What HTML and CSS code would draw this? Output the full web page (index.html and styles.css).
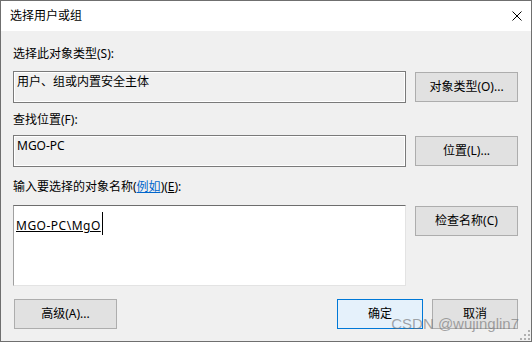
FILE: index.html
```html
<!DOCTYPE html>
<html>
    <head>
        <meta charset="utf-8">
        <title>选择用户或组</title>
        <link rel="stylesheet" href="styles.css">
    </head>
    <body>
        <div class="window">
            <div class="titlebar">
                <span class="title">选择用户或组</span>
                <svg class="close" width="10" height="10" viewBox="0 0 10 10">
                    <path d="M0.5 0.5 L9.5 9.5 M9.5 0.5 L0.5 9.5" stroke="#000" stroke-width="1" fill="none"/>
                </svg>
            </div>
            <div class="content">
                <p class="label first">选择此对象类型(S):</p>
                <div class="row gap9">
                    <div class="field">用户、组或内置安全主体</div>
                    <button class="btn">对象类型(O)...</button>
                </div>
                <p class="label gap9">查找位置(F):</p>
                <div class="row gap7">
                    <div class="field">MGO-PC</div>
                    <button class="btn">位置(L)...</button>
                </div>
                <p class="label gap12">输入要选择的对象名称(<a class="link" href="#">例如</a>)(<u>E</u>):</p>
                <div class="row top gap10">
                    <div class="names"><span class="typed">MGO-PC\MgO</span><span class="caret"></span></div>
                    <button class="btn check">检查名称(C)</button>
                </div>
                <div class="footer">
                    <button class="btn advanced">高级(A)...</button>
                    <div class="actions">
                        <button class="btn small default">确定</button>
                        <button class="btn small">取消</button>
                    </div>
                </div>
            </div>
            <span class="watermark">CSDN @wujinglin7</span>
            <svg class="grip" width="10" height="10" viewBox="0 0 10 10">
                <rect x="8" y="0" width="2" height="2" fill="#b0b0b0"/>
                <rect x="4" y="4" width="2" height="2" fill="#b0b0b0"/>
                <rect x="8" y="4" width="2" height="2" fill="#b0b0b0"/>
                <rect x="0" y="8" width="2" height="2" fill="#b0b0b0"/>
                <rect x="4" y="8" width="2" height="2" fill="#b0b0b0"/>
                <rect x="8" y="8" width="2" height="2" fill="#b0b0b0"/>
            </svg>
        </div>
    </body>
</html>
```

FILE: styles.css
```css
*{margin:0;padding:0}
body{
    background:#fff;
}
.window{
    position:relative;
    width:532px;
    height:342px;
    box-sizing:border-box;
    border:1px solid #6f6f6f;
    background:#f0f0f0;
    font:12px/16px "Noto Sans", "Noto Sans CJK SC", sans-serif;
    color:#000;
}
.titlebar{
    height:30px;
    background:#fff;
    display:flex;
    align-items:center;
    justify-content:space-between;
    padding:0 9px;
}
.title{
    font-size:12px;
}
.content{
    padding:15px 13px 0 12px;
}
.label.gap9{margin-top:9px}
.label.gap12{margin-top:12px}
.row{
    display:flex;
    align-items:center;
    gap:9px;
}
.row.top{
    align-items:flex-start;
}
.gap9{margin-top:9px}
.gap7{margin-top:7px}
.gap10{margin-top:10px}
.field{
    width:393px;
    height:32px;
    box-sizing:border-box;
    border:1px solid #7a7a7a;
    box-shadow:inset 0 0 0 1px #fff;
    padding:2px 3px 0;
}
.names{
    width:393px;
    height:81px;
    box-sizing:border-box;
    background:#fff;
    border:1px solid;
    border-color:#6d6d6d #e3e3e3 #e3e3e3 #a0a0a0;
    padding:6px 2px 0;
}
.typed{
    text-decoration:underline;
    letter-spacing:.5px;
}
.caret{
    display:inline-block;
    width:1px;
    height:23px;
    margin-left:1px;
    background:#000;
    vertical-align:-5px;
}
.btn{
    width:103px;
    height:30px;
    box-sizing:border-box;
    border:1px solid #adadad;
    background:#e1e1e1;
    font:inherit;
    color:#000;
}
.btn.check{
    margin-top:1px;
}
.btn.small{
    width:86px;
}
.btn.default{
    border-color:#0078d7;
    background:#e5f1fb;
}
.link{
    color:#0066cc;
    text-decoration:underline;
}
.footer{
    display:flex;
    justify-content:space-between;
    margin-top:13px;
}
.advanced{
    margin-left:1px;
}
.actions{
    display:flex;
    gap:9px;
}
.watermark{
    position:absolute;
    right:12px;
    bottom:9px;
    font:15px/16px "Liberation Sans", sans-serif;
    color:rgba(110,110,110,.6);
}
.grip{
    position:absolute;
    right:1px;
    bottom:1px;
}
```
